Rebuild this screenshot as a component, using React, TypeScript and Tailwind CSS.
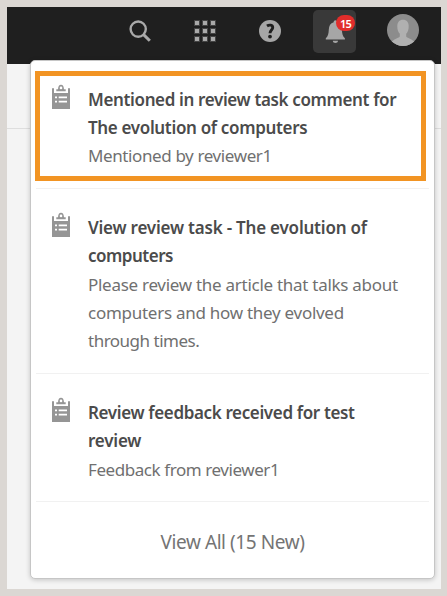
import React from "react";

type Line = { text: string; track: string };
type Notice = { title: Line[]; body: Line[]; marked?: boolean; height: string; leading: string };

const notices: Notice[] = [
  {
    title: [
      { text: "Mentioned in review task comment for", track: "tracking-[-0.36px]" },
      { text: "The evolution of computers", track: "tracking-[-0.34px]" },
    ],
    body: [{ text: "Mentioned by reviewer1", track: "tracking-[-0.39px]" }],
    marked: true,
    height: "h-[128px]",
    leading: "leading-[28px]",
  },
  {
    title: [
      { text: "View review task - The evolution of", track: "tracking-[-0.21px]" },
      { text: "computers", track: "tracking-[-0.5px]" },
    ],
    body: [
      { text: "Please review the article that talks about", track: "tracking-[-0.28px]" },
      { text: "computers and how they evolved", track: "tracking-[-0.27px]" },
      { text: "through times.", track: "tracking-[-0.5px]" },
    ],
    height: "h-[185px]",
    leading: "leading-[28.3px]",
  },
  {
    title: [
      { text: "Review feedback received for test", track: "tracking-[-0.36px]" },
      { text: "review", track: "tracking-[-0.2px]" },
    ],
    body: [{ text: "Feedback from reviewer1", track: "tracking-[-0.43px]" }],
    height: "h-[128px]",
    leading: "leading-[28.3px]",
  },
];

function Clipboard() {
  return (
    <svg width="18" height="25" viewBox="0 0 18 25" className="-mt-0.5 shrink-0">
      <path d="M0 4.300h2V9h14V4.300h2V25H0z" fill="#959595" />
      <path d="M4.300 7.300V5.200H6C6.200 2.200 7.200.8 9 .8s2.800 1.400 3 4.400h1.700v2.100z" fill="#959595" />
      <circle cx="9" cy="3.900" r="1.300" fill="#fff" />
      <path d="M3 12.500h2v1.800H3zM6.700 12.500H15v1.800H6.700zM3 16.700h2v1.800H3zM6.700 16.700H15v1.800H6.700z" fill="#fff" />
    </svg>
  );
}

function Item({ notice }: { notice: Notice }) {
  return (
    <li className={`relative mx-[5px] flex border-b border-[#f1f1f1] pl-4 pt-[25px] ${notice.height}`}>
      {notice.marked && (
        <div className="absolute -left-px top-[10px] h-[110px] w-[391px] border-[5px] border-[#f29423]" />
      )}
      <Clipboard />
      <div className={`ml-[18px] text-[17px] whitespace-nowrap ${notice.leading}`}>
        {notice.title.map((l) => (
          <div key={l.text}>
            <span className={`font-semibold text-[#4b4b4b] ${l.track}`}>{l.text}</span>
          </div>
        ))}
        {notice.body.map((l) => (
          <div key={l.text}>
            <span className={`text-[#707070] ${l.track}`}>{l.text}</span>
          </div>
        ))}
      </div>
    </li>
  );
}

function Header() {
  return (
    <header className="flex h-[57px] items-start bg-[#1f1f1f]">
      <svg width="24" height="24" viewBox="0 0 24 24" className="ml-[121px] mt-[12px]" fill="none" stroke="#a9a9a9">
        <circle cx="10.2" cy="10.1" r="7.6" strokeWidth="2.4" />
        <path d="M15.600 15.600l6.200 6.200" strokeWidth="3" />
      </svg>
      <div className="ml-[43px] mt-[14px] grid grid-cols-3 gap-1">
        {[0, 1, 2, 3, 4, 5, 6, 7, 8].map((i) => (
          <i key={i} className="block size-1 bg-[#a9a9a9] outline outline-1 outline-[#444444]" />
        ))}
      </div>
      <svg width="22" height="22" viewBox="0 0 22 22" className="ml-[44px] mt-[13px]">
        <circle cx="11" cy="11" r="11" fill="#a6a6a6" />
        <path d="M8 6c2.200-1.500 5.800-1.200 5.700 1.700-.1 2.200-2.700 2.400-2.700 5.500" fill="none" stroke="#1f1f1f" strokeWidth="2.9" />
        <circle cx="11" cy="16.600" r="1.900" fill="#1f1f1f" />
      </svg>
      <div className="relative ml-[32px] mt-[3px] size-[43px] rounded-[5px] bg-[#393939]">
        <svg width="43" height="43" viewBox="0 0 43 43" fill="#a6a6a6">
          <path d="M22.4 10.3c1 0 1.700.7 1.700 1.900 3.300 1 4.600 3.600 4.800 7.200.2 4.500.8 6.800 3 8.800v1.300H12.800v-1.300c2.200-2 2.800-4.300 3-8.800.2-3.600 1.600-6.200 4.900-7.200 0-1.200.7-1.900 1.700-1.900z" />
          <path d="M19.8 30.7H25c0 3-5.200 3-5.200 0z" />
        </svg>
        <span className="absolute left-[23px] top-[5px] flex h-4 w-[19px] items-center justify-center rounded-full bg-[#e12d2b] text-[11px] font-semibold leading-none tracking-[-0.8px] text-white">
          15
        </span>
      </div>
      <svg width="32" height="32" viewBox="0 0 32 32" className="ml-[31px] mt-[7px]">
        <defs>
          <clipPath id="avatar"><circle cx="16" cy="16" r="16" /></clipPath>
        </defs>
        <g clipPath="url(#avatar)">
          <rect width="32" height="32" fill="#8c8c8c" />
          <path d="M16 5.800c3.700 0 5.700 2.500 5.700 6.500 0 3.400-.7 5.700-2.500 7.500v2.500c0 1.800 7 2.500 8.800 6.700v4H4v-4c1.800-4.200 8.800-4.900 8.800-6.700v-2.500c-1.800-1.800-2.500-4.100-2.500-7.500 0-4 2-6.500 5.700-6.500z" fill="#b0b0b0" />
        </g>
      </svg>
    </header>
  );
}

export default function App() {
  return (
    <div className="h-[596px] w-[447px] overflow-hidden bg-[#dbd7d3] p-[7px] font-['Noto_Sans',sans-serif]">
      <main className="relative h-[582px] w-[434px] bg-[#f4f4f4]">
        <Header />
        <div className="h-[65px] border-b border-[#dedede]" />
        <section className="absolute left-[23px] top-[53px] h-[519px] w-[405px] rounded-[5px] border border-[#c6c6c6] bg-white shadow-[0_1px_5px_rgba(0,0,0,0.2)]">
          <ul>
            {notices.map((n) => (
              <Item key={n.title[0].text} notice={n} />
            ))}
          </ul>
          <div className="flex h-[76px] items-center justify-center pt-[4px] text-[19px] tracking-[-0.43px] text-[#747474]">
            View All (15 New)
          </div>
        </section>
      </main>
    </div>
  );
}
